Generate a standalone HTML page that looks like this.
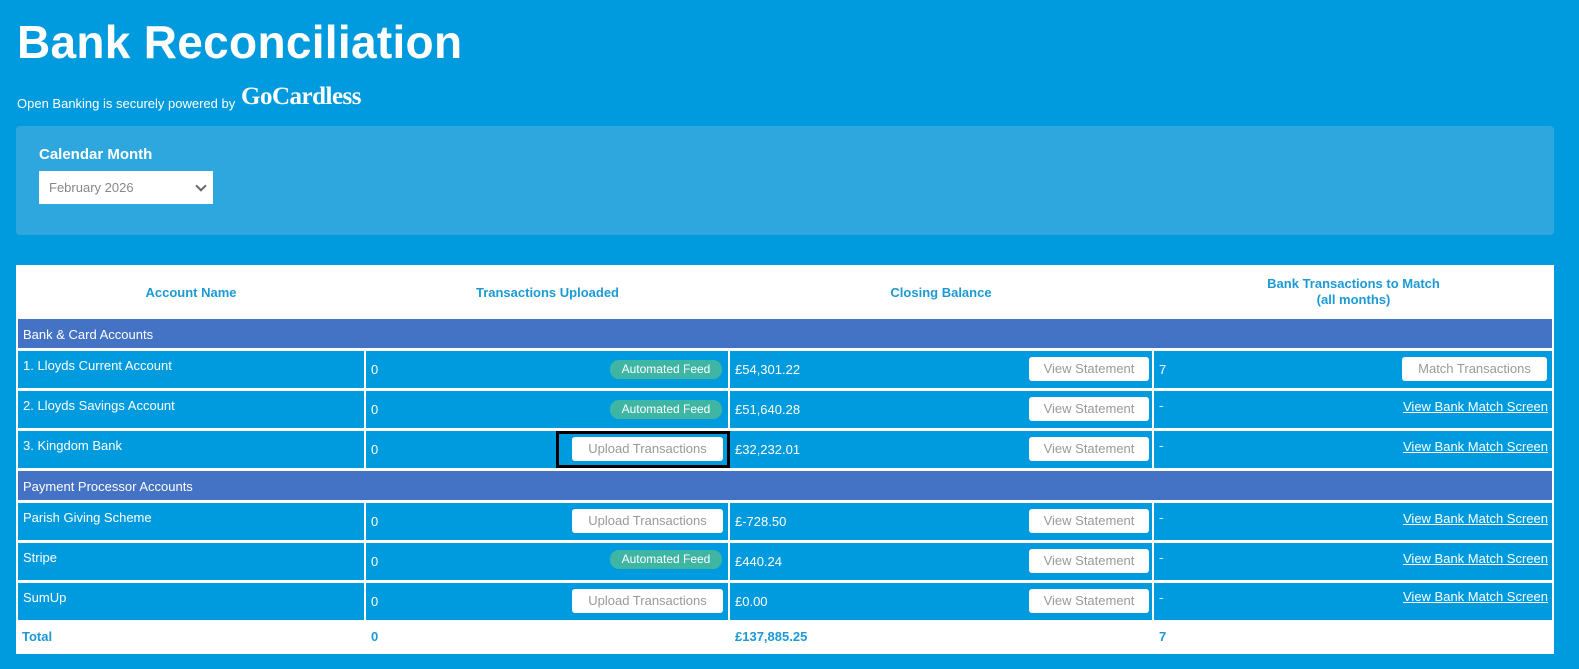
<!DOCTYPE html>
<html><head><meta charset="utf-8"><style>
*{box-sizing:border-box;margin:0;padding:0}
body{width:1579px;height:669px;background:#009bde;font-family:"Liberation Sans",sans-serif;color:#fff;position:relative;overflow:hidden}
.a{position:absolute}
h1{position:absolute;left:17px;top:15px;font-size:46px;font-weight:bold;letter-spacing:0.3px}
.sub{left:17px;top:96px;font-size:13px}
.gc{left:241px;top:83px;font-family:"Liberation Serif",serif;font-weight:bold;font-size:25px;letter-spacing:-0.5px}
.panel{left:16px;top:126px;width:1538px;height:109px;background:#2ea7df;border-radius:4px}
.cal{left:39px;top:146px;font-size:15px;font-weight:bold}
.sel{left:39px;top:171px;width:174px;height:33px;background:#fff;color:#888;font-size:13px;padding:9px 10px}
.sel:after{content:"";position:absolute;right:8px;top:11px;width:6px;height:6px;border-right:2px solid #666;border-bottom:2px solid #666;transform:rotate(45deg)}
.tbl{left:16px;top:265px;width:1538px;height:389px;background:#fff}
.hd{color:#1c9ad6;font-weight:bold;font-size:13px;text-align:center}
.sec{background:#4472c4;left:18px;width:1534px;height:29px;font-size:13px;padding:8px 5px}
.c{background:#009bde;height:37px;font-size:13px;padding:0 5px;line-height:37px}
.btn{position:absolute;background:#fff;color:#999;border-radius:3px;font-size:13px;text-align:center;height:24px;line-height:24px}
.pill{position:absolute;background:#3fb6a4;color:#fff;border-radius:9px;font-size:12px;text-align:center;height:19px;line-height:19px;width:112px;left:610px}
.lnk{position:absolute;right:31px;text-decoration:underline;font-size:13px}
.tot{color:#1c9ad6;font-weight:bold;font-size:13px;top:629px}
</style></head><body>
<h1>Bank Reconciliation</h1>
<div class="a sub">Open Banking is securely powered by</div>
<div class="a gc">GoCardless</div>
<div class="a panel"></div>
<div class="a cal">Calendar Month</div>
<div class="a sel">February 2026</div>
<div class="a tbl"></div>
<div class="a hd" style="left:16px;width:350px;top:285px">Account Name</div>
<div class="a hd" style="left:366px;width:363px;top:285px">Transactions Uploaded</div>
<div class="a hd" style="left:729px;width:424px;top:285px">Closing Balance</div>
<div class="a hd" style="left:1153px;width:401px;top:276px;line-height:16px">Bank Transactions to Match<br>(all months)</div>

<div class="a sec" style="top:319px">Bank &amp; Card Accounts</div>
<div class="a sec" style="top:471px">Payment Processor Accounts</div>

<div class="a c" style="left:18px;width:346px;top:351px;line-height:30px">1. Lloyds Current Account</div>
<div class="a c" style="left:366px;width:362px;top:351px">0</div>
<div class="a c" style="left:730px;width:422px;top:351px">£54,301.22</div>
<div class="a c" style="left:1154px;width:398px;top:351px">7</div>
<div class="a c" style="left:18px;width:346px;top:391px;line-height:30px">2. Lloyds Savings Account</div>
<div class="a c" style="left:366px;width:362px;top:391px">0</div>
<div class="a c" style="left:730px;width:422px;top:391px">£51,640.28</div>
<div class="a c" style="left:1154px;width:398px;top:391px;line-height:30px">-</div>
<div class="a c" style="left:18px;width:346px;top:431px;line-height:30px">3. Kingdom Bank</div>
<div class="a c" style="left:366px;width:362px;top:431px">0</div>
<div class="a c" style="left:730px;width:422px;top:431px">£32,232.01</div>
<div class="a c" style="left:1154px;width:398px;top:431px;line-height:30px">-</div>
<div class="a c" style="left:18px;width:346px;top:503px;line-height:30px">Parish Giving Scheme</div>
<div class="a c" style="left:366px;width:362px;top:503px">0</div>
<div class="a c" style="left:730px;width:422px;top:503px">£-728.50</div>
<div class="a c" style="left:1154px;width:398px;top:503px;line-height:30px">-</div>
<div class="a c" style="left:18px;width:346px;top:543px;line-height:30px">Stripe</div>
<div class="a c" style="left:366px;width:362px;top:543px">0</div>
<div class="a c" style="left:730px;width:422px;top:543px">£440.24</div>
<div class="a c" style="left:1154px;width:398px;top:543px;line-height:30px">-</div>
<div class="a c" style="left:18px;width:346px;top:583px;line-height:30px">SumUp</div>
<div class="a c" style="left:366px;width:362px;top:583px">0</div>
<div class="a c" style="left:730px;width:422px;top:583px">£0.00</div>
<div class="a c" style="left:1154px;width:398px;top:583px;line-height:30px">-</div>

<div class="pill" style="top:360px">Automated Feed</div>
<div class="pill" style="top:400px">Automated Feed</div>
<div class="pill" style="top:550px">Automated Feed</div>
<div class="a" style="left:556px;top:431px;width:174px;height:37px;border:3px solid #000"></div>
<div class="btn" style="left:572px;top:437px;width:151px">Upload Transactions</div>
<div class="btn" style="left:572px;top:509px;width:151px">Upload Transactions</div>
<div class="btn" style="left:572px;top:589px;width:151px">Upload Transactions</div>
<div class="btn" style="left:1029px;top:357px;width:120px">View Statement</div>
<div class="btn" style="left:1029px;top:397px;width:120px">View Statement</div>
<div class="btn" style="left:1029px;top:437px;width:120px">View Statement</div>
<div class="btn" style="left:1029px;top:509px;width:120px">View Statement</div>
<div class="btn" style="left:1029px;top:549px;width:120px">View Statement</div>
<div class="btn" style="left:1029px;top:589px;width:120px">View Statement</div>
<div class="btn" style="left:1402px;top:357px;width:145px">Match Transactions</div>
<div class="lnk" style="top:399px">View Bank Match Screen</div>
<div class="lnk" style="top:439px">View Bank Match Screen</div>
<div class="lnk" style="top:511px">View Bank Match Screen</div>
<div class="lnk" style="top:551px">View Bank Match Screen</div>
<div class="lnk" style="top:589px">View Bank Match Screen</div>

<div class="a tot" style="left:22px">Total</div>
<div class="a tot" style="left:371px">0</div>
<div class="a tot" style="left:735px">£137,885.25</div>
<div class="a tot" style="left:1159px">7</div>
</body></html>
